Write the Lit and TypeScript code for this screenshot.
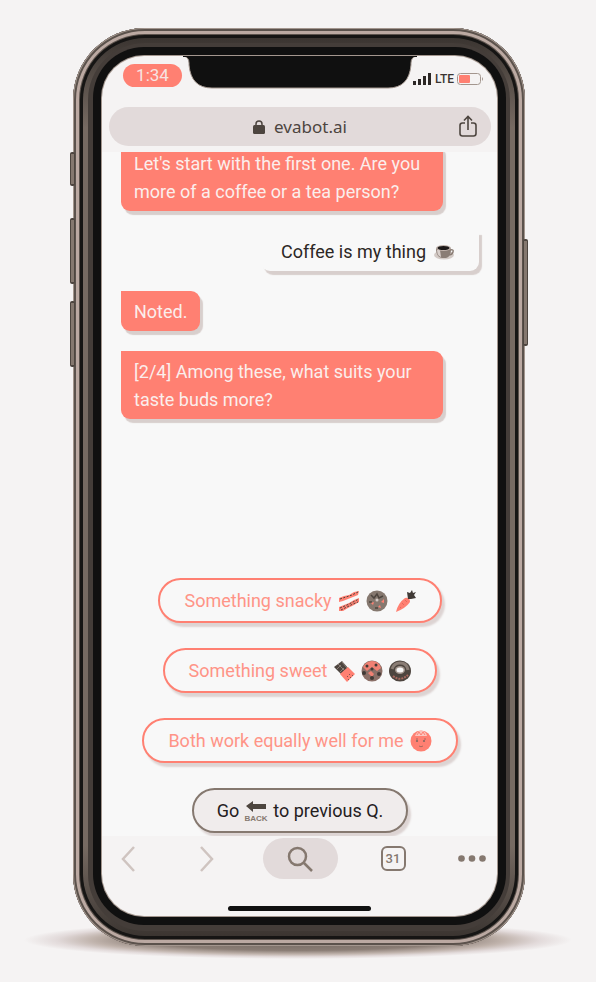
import { LitElement, html, svg, css, nothing } from "lit";
import { customElement, property } from "lit/decorators.js";

const icons: Record<string, unknown> = {
  cup: svg`
    <ellipse cx="11" cy="14" rx="10" ry="4.5" fill="#d3cac6"/>
    <path d="M3 7Q3 16 9 17H13Q18 16 18 7Z" fill="#8a7d75"/>
    <path d="M4 9Q4 15 8 16L7 9Z" fill="#d9d0cc"/>
    <path d="M17 9Q21 8 20 11Q19 14 16 14" fill="none" stroke="#8a7d75" stroke-width="1.5"/>
    <ellipse cx="10.5" cy="7" rx="7.5" ry="3" fill="#c0b3ac"/>
    <ellipse cx="10.5" cy="7" rx="6" ry="2" fill="#1c1918"/>`,
  bacon: svg`
    <path d="M1 8L6 6L11 5L16 2L21 1L20 5L15 7L10 9L5 11L1 12Z" fill="#ff8072"/>
    <path d="M1 17L6 15L11 13L16 10L21 8L21 12L16 15L10 18L5 21L1 21Z" fill="#ff8072"/>
    <path d="M2 9L8 7L14 5L20 2M2 18L9 15L15 12L21 9M3 20L9 17L15 14L20 12" fill="none" stroke="#4d453f" stroke-width="1" stroke-dasharray="2 1.5"/>`,
  cookie: svg`
    <circle cx="11" cy="11" r="10.5" fill="#85786f"/>
    <path d="M5 5L8 8L11 4L13 8L17 6M3 12H6M9 18H12" fill="none" stroke="#4d453f" stroke-width="1.5"/>
    <circle cx="11" cy="10" r="1.5" fill="#d3cac6"/>
    <path d="M15 12L18 9V13ZM5 13L8 12L7 15ZM12 17L14 15L15 18Z" fill="#ff8072"/>`,
  carrot: svg`
    <path d="M11 8Q16 7 16 12Q12 18 2 22Q4 13 11 8Z" fill="#ff8072"/>
    <path d="M8 13L10 15M11 10L13 12M6 17L7 18" stroke="#e3695d"/>
    <path d="M14 9L13 2L16 3L18 0L19 3L22 2L20 5L22 8L17 9Z" fill="#403a36"/>`,
  chocolate: svg`
    <path d="M9 1L15 8L8 14L1 7Z" fill="#4d453f"/>
    <path d="M5 4L12 11M9 2L14 8M8 5L4 9M11 8L7 12" stroke="#8a7d75"/>
    <path d="M15 7L22 14L14 22L7 14Z" fill="#ff8072"/>
    <path d="M14 17L18 13M15 20L20 15" stroke="#4d453f" stroke-dasharray="1 2"/>`,
  muffin: svg`
    <circle cx="11" cy="11" r="10.5" fill="#8a6f67"/>
    <path d="M2 7Q5 1 11 1Q18 1 20 8L16 11L11 7L6 11Z" fill="#f08073"/>
    <path d="M7 13L10 11L13 14L11 17Z" fill="#f08073"/>
    <g fill="#403a36"><circle cx="6" cy="6" r="1.5"/><circle cx="15" cy="5" r="1.5"/><circle cx="3" cy="13" r="2"/><circle cx="11" cy="18" r="2"/><circle cx="18" cy="14" r="2"/><circle cx="11" cy="9" r="1.5"/></g>`,
  donut: svg`
    <ellipse cx="11" cy="11" rx="11" ry="10.5" fill="#4d453f"/>
    <path d="M3 9Q5 3 11 3Q18 3 19 10" fill="none" stroke="#8a7d75" stroke-width="3"/>
    <path d="M4 16Q11 22 19 15" fill="none" stroke="#a8695f" stroke-width="2" stroke-dasharray="2 1"/>
    <ellipse cx="11" cy="10" rx="5" ry="4" fill="#a3968e"/>
    <ellipse cx="11" cy="10" rx="3.5" ry="2.5" fill="#f7f7f7"/>`,
  face: svg`
    <circle cx="11" cy="11" r="10.5" fill="#ff8072"/>
    <path d="M5 6Q7 1 11 1Q16 1 17 6" fill="#fbc6bf"/>
    <path d="M7 5L9 2L11 5L13 2L15 5" fill="none" stroke="#ff8072"/>
    <g fill="#85655d"><circle cx="7" cy="11" r="1.1"/><circle cx="14" cy="11" r="1.1"/></g>
    <path d="M6 9H8M14 9H16M9 16Q11 17.5 13 16" fill="none" stroke="#a8695f"/>`,
  back: svg`
    <path d="M1 6L8 1V4H21V9H8V12Z" fill="#4d453f"/>
    <text x="11" y="21" text-anchor="middle" class="label">BACK</text>`,
};

@customElement("chat-glyph")
class ChatGlyph extends LitElement {
  @property() name = "";
  static styles = css`
    :host { display: inline-flex; flex: none; }
    svg { width: 22px; height: 22px; overflow: visible; }
    .label { font: 700 8px "Liberation Sans", Arial, sans-serif; fill: #85786f; }
  `;
  render() {
    return html`<svg viewBox="0 0 22 22">${icons[this.name] ?? nothing}</svg>`;
  }
}

interface Message { from: "bot" | "user"; text: string; glyph?: string; }
interface Choice { before: string; glyphs: string[]; after?: string; muted?: boolean; }

const messages: Message[] = [
  { from: "bot", text: "Let's start with the first one. Are you more of a coffee or a tea person?" },
  { from: "user", text: "Coffee is my thing", glyph: "cup" },
  { from: "bot", text: "Noted." },
  { from: "bot", text: "[2/4] Among these, what suits your taste buds more?" },
];

const choices: Choice[] = [
  { before: "Something snacky", glyphs: ["bacon", "cookie", "carrot"] },
  { before: "Something sweet", glyphs: ["chocolate", "muffin", "donut"] },
  { before: "Both work equally well for me", glyphs: ["face"] },
  { before: "Go", glyphs: ["back"], after: "to previous Q.", muted: true },
];

@customElement("app-root")
class AppRoot extends LitElement {
  static styles = css`
    :host {
      display: block;
      --coral: #ff8072;
      --mist: #e2dada;
      --paper: #f8f8f8;
      --haze: #f5f3f3;
      --ink: #4d453f;
      --stone: #85786f;
      font-family: Roboto, "Liberation Sans", sans-serif;
    }
    * { box-sizing: border-box; }
    button { font: inherit; color: inherit; background: none; border: 0; padding: 0; margin: 0; }
    svg { display: block; }
    .stage {
      position: relative;
      display: flex;
      min-height: 100vh;
      padding: 28px 71px 36px 73px;
      background: var(--haze);
      overflow: hidden;
    }
    .ground {
      position: absolute;
      left: 24px;
      right: 24px;
      bottom: 23px;
      height: 38px;
      background: radial-gradient(closest-side, #6f655e 0%, #8a7d75 55%, #c0b3ac 75%, #e2dada 88%, rgba(226, 218, 218, 0) 100%);
    }
    .phone {
      position: relative;
      flex: 1;
      min-width: 0;
      display: flex;
      padding: 28px 28px 30px 29px;
      border-radius: 72px;
      background: #101010;
      box-shadow:
        inset 0 0 0 1px #a3968e,
        inset 0 0 0 3px #5b524c,
        inset 0 0 0 6px #bba9a2,
        inset 0 0 0 7px #5b524c,
        inset 0 0 0 10px #161514;
    }
    .rim {
      position: absolute;
      inset: 10px;
      border-radius: 62px;
      background: linear-gradient(#3b3531, #766a62 90px, #766a62 calc(100% - 90px), #3b3531);
    }
    .rim.inner {
      inset: 15px;
      border-radius: 57px;
      background: #443d39;
    }
    .key {
      position: absolute;
      width: 5px;
      background: var(--stone);
      border: solid var(--ink);
      border-width: 2px 1px;
      border-radius: 2px;
    }
    .mute { left: -3px; top: 124px; height: 34px; }
    .up { left: -3px; top: 190px; height: 66px; }
    .down { left: -3px; top: 273px; height: 66px; }
    .power { right: -3px; top: 211px; height: 107px; }
    .screen {
      position: relative;
      flex: 1;
      min-width: 0;
      display: flex;
      flex-direction: column;
      border-radius: 42px;
      background: var(--haze);
      box-shadow: 0 0 0 1px #a3968e, 0 0 0 9px #101010;
      overflow: hidden;
    }
    .notch {
      position: absolute;
      top: 0;
      left: 50%;
      width: 234px;
      margin-left: -117px;
    }
    .status {
      display: flex;
      justify-content: space-between;
      align-items: center;
      height: 38px;
      padding: 0 13px 0 21px;
    }
    .clock {
      width: 59px;
      line-height: 23px;
      border-radius: 12px;
      background: var(--coral);
      color: #f7e4e2;
      text-align: center;
      font-size: 17px;
    }
    .signals { display: flex; align-items: center; gap: 3px; padding-top: 7px; font-size: 12px; font-weight: 500; color: #3a3431; }
    .address {
      display: flex;
      align-items: center;
      justify-content: space-between;
      height: 39px;
      margin: 13px 6px 6px 7px;
      padding: 0 14px;
      border-radius: 20px;
      background: var(--mist);
      color: var(--ink);
    }
    .spacer { width: 18px; }
    .site { display: flex; align-items: center; gap: 9px; font: 17px "Noto Sans", sans-serif; }
    .chat {
      flex: 1;
      display: flex;
      flex-direction: column;
      justify-content: space-between;
      gap: 40px;
      padding: 0 18px 3px 19px;
      background: var(--paper);
      overflow: hidden;
      font-size: 18px;
      line-height: 28px;
    }
    .log { display: flex; flex-direction: column; gap: 20px; margin-top: -9px; }
    .bubble {
      align-self: flex-start;
      max-width: 322px;
      padding: 7px 13px 5px;
      border-radius: 0 9px 9px 9px;
      background: var(--coral);
      color: #fbeeec;
      box-shadow: 3px 4px 1px #d8cfcd;
    }
    .bubble.user {
      display: flex;
      align-items: center;
      gap: 7px;
      align-self: flex-end;
      padding-left: 20px;
      padding-right: 24px;
      border-radius: 9px 0 9px 9px;
      background: var(--paper);
      color: #2c2725;
    }
    .choices { display: flex; flex-direction: column; align-items: center; gap: 25px; }
    .choice {
      display: flex;
      align-items: center;
      gap: 6px;
      height: 45px;
      padding: 0 24px;
      border: 2px solid var(--coral);
      border-radius: 23px;
      background: var(--paper);
      color: #ff9487;
      white-space: nowrap;
      box-shadow: 3px 4px 2px #ddd4d3;
    }
    .choice.muted { padding: 0 23px; border-color: var(--stone); background: #f0ecec; color: #24201e; }
    .tools {
      display: grid;
      grid-template-columns: 52fr 106fr 80fr 106fr 51fr;
      align-items: center;
      justify-items: center;
      padding-top: 2px;
      color: var(--stone);
    }
    .tools button { display: grid; place-items: center; height: 41px; }
    .tools .find { width: 75px; border-radius: 21px; background: var(--mist); }
    .tools .count { width: 25px; height: 25px; border: 2px solid var(--stone); border-radius: 6px; font-size: 13px; font-weight: 500; }
    .home { width: 143px; height: 5px; margin: 27px auto 5px; border-radius: 3px; background: #101010; }
  `;

  render() {
    return html`
      <main class="stage">
        <div class="ground"></div>
        <div class="phone">
          <div class="rim"></div><div class="rim inner"></div>
          <i class="key mute"></i><i class="key up"></i><i class="key down"></i><i class="key power"></i>
          <div class="screen">
            <svg class="notch" viewBox="0 0 234 33" height="33" aria-hidden="true">
              <path d="M0 0Q6 1 6 7V9Q8 32 29 32H205Q226 32 228 9V7Q228 1 234 0Z" fill="#101010" stroke="#a3968e"/>
              <path d="M0 -1H234V1H0Z" fill="#101010"/>
            </svg>
            <header class="status">
              <time class="clock">1:34</time>
              <div class="signals">
                <svg width="19" height="12" viewBox="0 0 19 12" fill="#2c2725"><path d="M0 8H3V12H0ZM5 6H8V12H5ZM10 3H13V12H10ZM15 0H18V12H15Z"/></svg>
                <span>LTE</span>
                <svg width="27" height="12" viewBox="0 0 27 12"><rect x=".5" y=".5" width="23" height="11" rx="3" fill="none" stroke="#a3968e"/><rect x="2" y="2" width="11" height="8" rx="1" fill="#ff8072"/><path d="M25 4Q27 6 25 8Z" fill="#a3968e"/></svg>
              </div>
            </header>
            <nav class="address" aria-label="Address">
              <span class="spacer"></span>
              <button class="site">
                <svg width="12" height="14" viewBox="0 0 12 14"><path d="M3 6V4Q3 1 6 1T9 4V6" fill="none" stroke="#4d453f" stroke-width="1.5"/><rect y="5" width="12" height="9" rx="1.5" fill="#4d453f"/></svg>
                evabot.ai
              </button>
              <button aria-label="Share">
                <svg width="18" height="23" viewBox="0 0 18 23" fill="none" stroke="#4d453f" stroke-width="1.6"><path d="M6 8H3.5Q1 8 1 10.5V18.5Q1 21 3.5 21H14.5Q17 21 17 18.5V10.5Q17 8 14.5 8H12M9 15V2M5 5.5L9 1.5L13 5.5"/></svg>
              </button>
            </nav>
            <section class="chat">
              <div class="log">
                ${messages.map((m) => html`<div class="bubble ${m.from}">${m.text}${m.glyph ? html`<chat-glyph name=${m.glyph}></chat-glyph>` : nothing}</div>`)}
              </div>
              <div class="choices">
                ${choices.map((c) => html`<button class="choice ${c.muted ? "muted" : ""}"><span>${c.before}</span>${c.glyphs.map((g) => html`<chat-glyph name=${g}></chat-glyph>`)}${c.after ? html`<span>${c.after}</span>` : nothing}</button>`)}
              </div>
            </section>
            <footer>
              <nav class="tools" aria-label="Browser">
                <button aria-label="Back"><svg width="14" height="26" viewBox="0 0 14 26" fill="none" stroke="#cfc4c0" stroke-width="2.5"><path d="M13 1L2 13L13 25"/></svg></button>
                <button aria-label="Forward"><svg width="14" height="26" viewBox="0 0 14 26" fill="none" stroke="#cfc4c0" stroke-width="2.5"><path d="M1 1L12 13L1 25"/></svg></button>
                <button class="find" aria-label="Search"><svg width="26" height="26" viewBox="0 0 26 26" fill="none" stroke="#85786f" stroke-width="2.5"><circle cx="10.5" cy="10.5" r="8.5"/><path d="M17 17L25 25"/></svg></button>
                <button class="count" aria-label="31 tabs">31</button>
                <button aria-label="More"><svg width="28" height="7" viewBox="0 0 28 7" fill="#85786f"><circle cx="3.5" cy="3.5" r="3.3"/><circle cx="14" cy="3.5" r="3.3"/><circle cx="24.5" cy="3.5" r="3.3"/></svg></button>
              </nav>
              <div class="home"></div>
            </footer>
          </div>
        </div>
      </main>
    `;
  }
}
